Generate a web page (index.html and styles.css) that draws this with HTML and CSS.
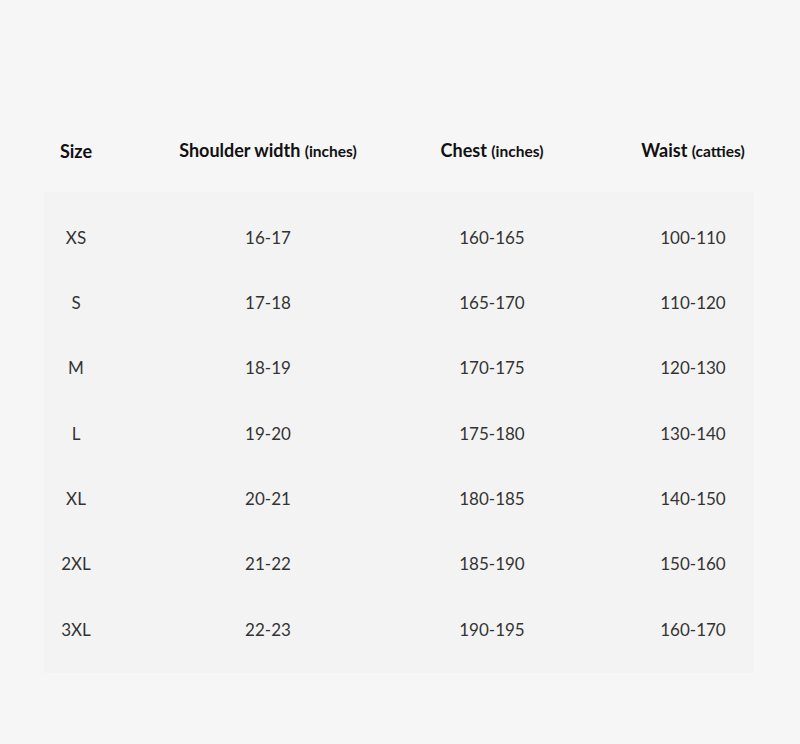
FILE: index.html
```html
<!DOCTYPE html>
<html>
<head>
<meta charset="utf-8">
<link rel="stylesheet" href="styles.css">
</head>
<body>
<div class="page">
  <div class="head grid">
    <div class="hcell">Size</div>
    <div class="hcell">Shoulder width <span class="unit">(inches)</span></div>
    <div class="hcell">Chest <span class="unit">(inches)</span></div>
    <div class="hcell">Waist <span class="unit">(catties)</span></div>
  </div>
  <div class="panel">
    <div class="grid row"><div class="cell">XS</div><div class="cell">16-17</div><div class="cell">160-165</div><div class="cell">100-110</div></div>
    <div class="grid row"><div class="cell">S</div><div class="cell">17-18</div><div class="cell">165-170</div><div class="cell">110-120</div></div>
    <div class="grid row"><div class="cell">M</div><div class="cell">18-19</div><div class="cell">170-175</div><div class="cell">120-130</div></div>
    <div class="grid row"><div class="cell">L</div><div class="cell">19-20</div><div class="cell">175-180</div><div class="cell">130-140</div></div>
    <div class="grid row"><div class="cell">XL</div><div class="cell">20-21</div><div class="cell">180-185</div><div class="cell">140-150</div></div>
    <div class="grid row"><div class="cell">2XL</div><div class="cell">21-22</div><div class="cell">185-190</div><div class="cell">150-160</div></div>
    <div class="grid row"><div class="cell">3XL</div><div class="cell">22-23</div><div class="cell">190-195</div><div class="cell">160-170</div></div>
  </div>
</div>
</body>
</html>
```
FILE: styles.css
```css
html, body {
  margin: 0;
  padding: 0;
  background: #f6f6f6;
}
body {
  font-family: "Lato", "Open Sans", sans-serif;
  color: #222;
  width: 800px;
  height: 744px;
  overflow: hidden;
}
.page {
  padding-top: 138px;
  padding-left: 44px;
}
.grid {
  display: grid;
  grid-template-columns: 64px 320px 128px 274px;
  width: 710px;
}
.head {
  height: 24px;
  align-items: center;
  margin-bottom: 30px;
}
.hcell {
  justify-self: center;
  white-space: nowrap;
  font-weight: 700;
  font-size: 18px;
  color: #111;
  line-height: 24px;
}
.unit {
  font-size: 15.5px;
  font-weight: 700;
}
.panel {
  width: 710px;
  height: 481px;
  box-sizing: border-box;
  background: #f3f3f3;
  padding-top: 13px;
}
.row {
  height: 65.33px;
  align-items: center;
}
.cell {
  justify-self: center;
  white-space: nowrap;
  font-size: 17px;
  font-weight: 400;
  color: #333;
  line-height: 24px;
}
```
